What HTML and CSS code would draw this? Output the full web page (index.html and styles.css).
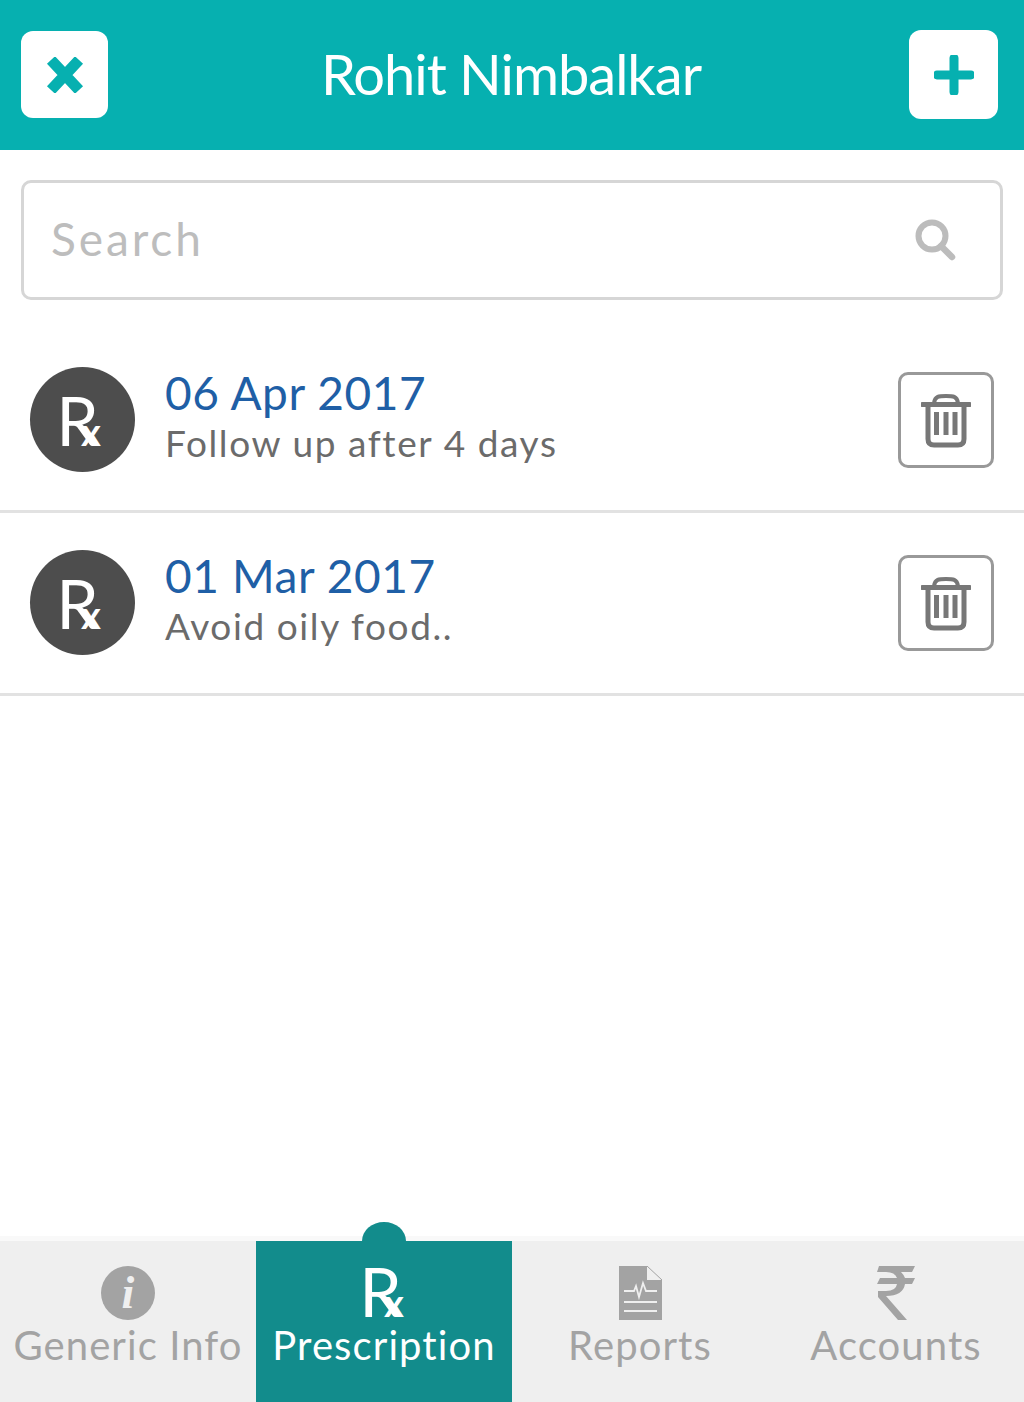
FILE: index.html
```html
<!DOCTYPE html>
<html lang="en">
<head>
<meta charset="utf-8">
<title>Rohit Nimbalkar</title>
<link rel="stylesheet" href="styles.css">
</head>
<body>
<div class="app">
  <header class="topbar">
    <button class="hbtn hbtn-close" aria-label="Close">
      <svg width="38" height="36" viewBox="0 0 38 36"><path d="M5 3 L33 33 M33 3 L5 33" stroke="#06b0b0" stroke-width="11"/></svg>
    </button>
    <h1 class="title">Rohit Nimbalkar</h1>
    <button class="hbtn hbtn-add" aria-label="Add">
      <svg width="40" height="40" viewBox="0 0 40 40"><path d="M20 3 V37 M3 20 H37" stroke="#06b0b0" stroke-width="9" stroke-linecap="round"/></svg>
    </button>
  </header>

  <div class="searchwrap">
    <div class="search">
      <span class="search-ph">Search</span>
      <svg width="42" height="42" viewBox="0 0 42 42"><circle cx="17" cy="17" r="13.5" fill="none" stroke="#bcbcbc" stroke-width="6"/><path d="M26 27 L37 38" stroke="#bcbcbc" stroke-width="6.500" stroke-linecap="round"/></svg>
    </div>
  </div>

  <main class="list">
    <article class="row">
      <div class="avatar"><div class="rx">Rx</div></div>
      <div class="info">
        <div class="date">06 Apr 2017</div>
        <div class="note">Follow up after 4 days</div>
      </div>
      <button class="trash" aria-label="Delete">
        <svg width="50" height="56" viewBox="0 0 50 56"><path d="M1.500 12.500 H48.500" stroke="#777" stroke-width="5" stroke-linecap="round"/><path d="M13 11 C14 4 18 4 25 4 C32 4 36 4 37 11" fill="none" stroke="#777" stroke-width="4"/><path d="M7 13 V47 Q7 53 13 53 H37 Q43 53 43 47 V13" fill="none" stroke="#777" stroke-width="5"/><path d="M15.500 20 V43 M25 20 V43 M34 20 V43" stroke="#777" stroke-width="5"/></svg>
      </button>
    </article>
    <article class="row">
      <div class="avatar"><div class="rx">Rx</div></div>
      <div class="info">
        <div class="date">01 Mar 2017</div>
        <div class="note">Avoid oily food..</div>
      </div>
      <button class="trash" aria-label="Delete">
        <svg width="50" height="56" viewBox="0 0 50 56"><path d="M1.500 12.500 H48.500" stroke="#777" stroke-width="5" stroke-linecap="round"/><path d="M13 11 C14 4 18 4 25 4 C32 4 36 4 37 11" fill="none" stroke="#777" stroke-width="4"/><path d="M7 13 V47 Q7 53 13 53 H37 Q43 53 43 47 V13" fill="none" stroke="#777" stroke-width="5"/><path d="M15.500 20 V43 M25 20 V43 M34 20 V43" stroke="#777" stroke-width="5"/></svg>
      </button>
    </article>
  </main>

  <nav class="tabs">
    <a class="tab">
      <span class="tab-icon"><span class="info-dot">i</span></span>
      <span class="tab-label">Generic Info</span>
    </a>
    <a class="tab tab-active">
      <span class="tab-icon"><span class="rx rx-tab">Rx</span></span>
      <span class="tab-label">Prescription</span>
    </a>
    <a class="tab">
      <span class="tab-icon">
        <svg width="43" height="54" viewBox="0 0 43 54"><path d="M0 0 H28 V14 H43 V54 H0 Z" fill="#a3a3a3"/><path d="M28 0 L43 14" stroke="#a3a3a3" stroke-width="1"/><path d="M5 25 H15 L17 20 L20 31 L24 17 L27 25 H38" fill="none" stroke="#efefef" stroke-width="1.800"/><path d="M5 36 H38 M5 45 H38" stroke="#efefef" stroke-width="2"/></svg>
      </span>
      <span class="tab-label">Reports</span>
    </a>
    <a class="tab">
      <span class="tab-icon">
        <svg width="38" height="54" viewBox="0 0 38 54"><path d="M2 0 H38 L35 6 H24 Q27 9 28 12 H38 L35 18 H28 Q26 30 9 30 L30 54 H21 L1 31 V25 H9 Q19 25 20 18 H0 L3 12 H20 Q18 6 9 6 H0 Z" fill="#a3a3a3"/></svg>
      </span>
      <span class="tab-label">Accounts</span>
    </a>
  </nav>
</div>
</body>
</html>
```

FILE: styles.css
```css
* { box-sizing: border-box; }
html, body { margin: 0; padding: 0; background: #fff; }
body { font-family: "Lato", "Liberation Sans", sans-serif; }
.app { width: 1024px; height: 1402px; display: flex; flex-direction: column; overflow: hidden; }

.topbar { height: 150px; flex: none; background: #06b0b0; display: flex; align-items: center; justify-content: space-between; padding: 0 26px 1px 21px; }
.title { margin: 0 0 2px 5px; color: #fff; font-size: 56px; font-weight: 400; letter-spacing: -1px; line-height: 1; }
.hbtn { border: 0; padding: 0; background: #fff; border-radius: 12px; display: flex; align-items: center; justify-content: center; }
.hbtn-close { width: 87px; height: 87px; }
.hbtn-add { width: 89px; height: 89px; }

.searchwrap { flex: none; padding: 30px 21px 30px; }
.search { height: 120px; border: 3px solid #d6d6d6; border-radius: 10px; display: flex; align-items: center; justify-content: space-between; padding: 0 43px 0 27px; }
.search-ph { color: #bdbdbd; font-size: 46px; letter-spacing: 2.900px; margin-bottom: 4px; }

.list { flex: 1; }
.row { height: 183px; border-bottom: 3px solid #e2e2e2; display: flex; align-items: center; padding: 0 30px 1px; }
.avatar { width: 105px; height: 105px; border-radius: 50%; background: #4d4d4d; flex: none; display: flex; align-items: center; justify-content: center; }
.info { flex: 1; margin: 0 0 6px 30px; display: flex; flex-direction: column; }
.date { color: #1f5fa6; font-size: 46px; line-height: 52px; letter-spacing: 0.600px; }
.note { color: #6b6b6b; font-size: 37px; line-height: 49px; letter-spacing: 1.600px; margin-top: -1px; }
.trash { width: 96px; height: 96px; flex: none; border: 3px solid #999; border-radius: 10px; background: #fff; padding: 0; margin-top: 1px; display: flex; align-items: center; justify-content: center; }

.rx { display: block; color: #fff; font-size: 38px; font-weight: 700; line-height: 1; margin-right: 8px; white-space: nowrap; }
.rx::first-letter { font-size: 68px; font-weight: 400; letter-spacing: -18px; }
.rx-tab { margin: 0 5px 4px 0; }

.tabs { flex: none; height: 161px; background: #efefef; display: grid; grid-template-columns: repeat(4, 256px); box-shadow: 0 -5px 0 #f9f9f9; }
.tab { position: relative; display: flex; flex-direction: column; align-items: center; padding-top: 25px; color: #a3a3a3; }
.tab-icon { height: 54px; display: flex; align-items: center; justify-content: center; }
.tab-label { font-size: 40px; line-height: 52px; margin-top: -1px; letter-spacing: 1.100px; white-space: nowrap; }
.tab-active { background: #128c8c; color: #fff; }
.tab-active::before { content: ""; position: absolute; left: 106px; top: -19px; width: 44px; height: 19px; background: #128c8c; border-radius: 22px 22px 0 0 / 19px 19px 0 0; }
.info-dot { width: 54px; height: 54px; border-radius: 50%; background: #a3a3a3; color: #efefef; display: flex; align-items: center; justify-content: center; font-family: "Liberation Serif", serif; font-style: italic; font-weight: 700; font-size: 46px; line-height: 1; }
```
